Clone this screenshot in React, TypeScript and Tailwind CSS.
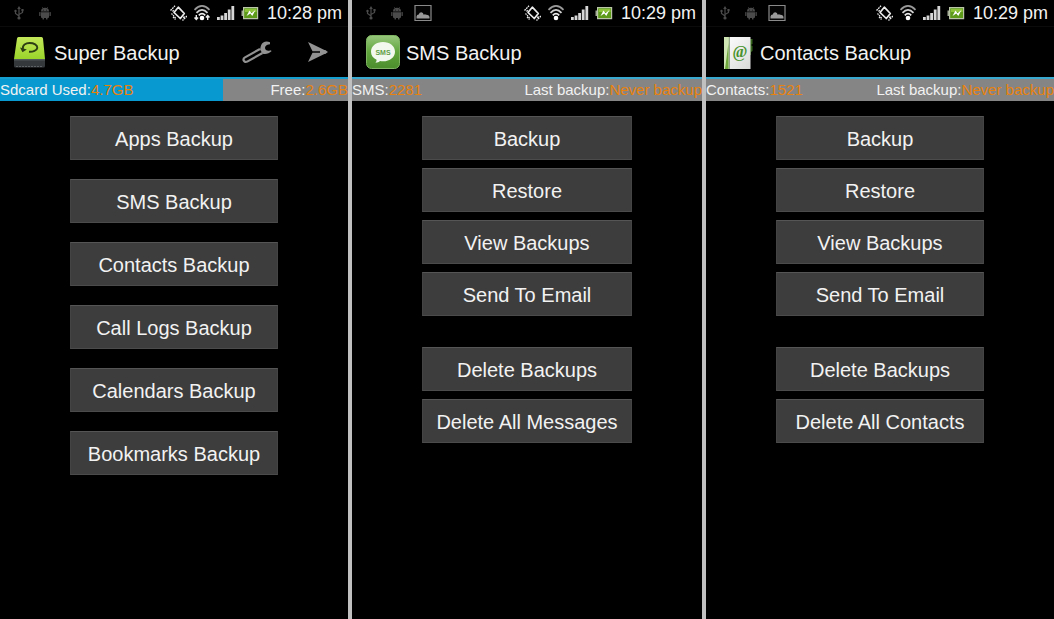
import { Fragment, type ReactNode } from "react";
import clsx from "clsx";

type InfoPair = { label: string; value: string };

type Screen = {
  title: string;
  time: string;
  icon: ReactNode;
  left: InfoPair;
  right: InfoPair;
  used?: number;
  home?: boolean;
  groups: string[][];
};

const UsbIcon = () => (
  <svg viewBox="0 0 18 18" className="size-[18px]" fill="none" stroke="#4b4b4b" aria-hidden="true">
    <path d="M9 4v10M9 12 5.500 9.500V7.500M9 10.500l3.500-2V6.500" strokeWidth="1.200" />
    <path d="M9 2 7.200 5h3.600z" fill="#4b4b4b" stroke="none" />
    <circle cx="9" cy="14" r="1.600" fill="#4b4b4b" stroke="none" />
    <circle cx="5.500" cy="7" r="1.200" fill="#4b4b4b" stroke="none" />
    <path d="M11.400 5h2.200v2.200h-2.200z" fill="#4b4b4b" stroke="none" />
  </svg>
);

const DroidIcon = () => (
  <svg viewBox="0 0 18 18" className="size-[18px]" fill="#4b4b4b" aria-hidden="true">
    <path d="M5 7.500a4 3.700 0 0 1 8 0z" />
    <path d="M5 8.300h8v4.700a1 1 0 0 1-1 1H6a1 1 0 0 1-1-1z" />
    <rect x="3.200" y="8" width="1.300" height="4" rx=".6" />
    <rect x="13.500" y="8" width="1.300" height="4" rx=".6" />
    <rect x="6.500" y="13" width="1.500" height="2.600" rx=".6" />
    <rect x="10" y="13" width="1.500" height="2.600" rx=".6" />
    <path d="m6.200 3 1 1.500M11.800 3l-1 1.500" stroke="#4b4b4b" strokeWidth=".6" />
    <path d="M7 5.700h.8v.8H7zM10.200 5.700h.8v.8h-.8z" fill="#000" />
  </svg>
);

const PictureIcon = () => (
  <svg viewBox="0 0 18 18" className="size-[18px]" aria-hidden="true">
    <path d="M1 1.500h16v15H1z" fill="#050505" stroke="#8a8a8a" strokeWidth="1.200" />
    <path d="M2.500 14.500V12.500q.3-2 2.200-2 .8-2.300 2.600-2.300 2 .2 2.400 2.500 1.200-.9 2.500 0 2.600-.2 3.300 2v1.800z" fill="#9a9a9a" />
  </svg>
);

const VibrateIcon = () => (
  <svg viewBox="0 0 18 18" className="size-[18px]" fill="none" stroke="#ececec" aria-hidden="true">
    <path d="m9.300 3.200 6 6.300-4 5L5 8.500z" strokeWidth="1.700" strokeLinejoin="round" />
    <path d="M1.500 6.500 6 1.800M3.500 7.500 5 6M18 12l-4.500 4.500M15.500 12.500 14 14" strokeWidth="1.300" strokeDasharray="1.800 .7" />
    <path d="m2.500 9.500 4.500 5M4 13l2.500 2.500" strokeWidth="1.200" strokeDasharray="1.500 .8" />
  </svg>
);

const WifiIcon = ({ hotspot }: { hotspot?: boolean }) => (
  <svg viewBox="0 0 18 18" className="size-[18px]" fill="none" stroke="#ececec" aria-hidden="true">
    <path d="M1.500 5.800Q9-2 16.500 5.800" stroke="#9a9a9a" strokeWidth="1.700" />
    <path d="M3.500 8.800Q9 2.800 14.500 8.800" stroke="#d0d0d0" strokeWidth="1.800" />
    <path d="M5.800 11.300Q9 7.800 12.200 11.300" strokeWidth="1.800" />
    <circle cx="9" cy="14" r="2.300" fill="#fff" stroke="none" />
    {hotspot && (
      <path d="M3.300 11v4.500M1.500 13.500l1.800 2 1.800-2M14.700 16v-4.500M12.900 13.500l1.800-2 1.800 2" strokeWidth="1.400" />
    )}
  </svg>
);

const SignalIcon = () => (
  <svg viewBox="0 0 18 18" className="size-[18px]" fill="#d6d6d6" aria-hidden="true">
    <path d="M0 13h2.800v3H0zM3.600 11.500h2.800V16H3.600zM7.200 9H10v7H7.200zM10.800 5.500h2.800V16h-2.800zM14.400 2h2.800v14h-2.800z" />
  </svg>
);

const BatteryIcon = () => (
  <svg viewBox="0 0 18 18" className="size-[18px]" aria-hidden="true">
    <path d="M.5 6.500h1.500v5.500H.5z" fill="#a5ad98" />
    <path d="M2.600 3.600h14v11h-14z" fill="#5d9a1a" stroke="#b9c5a6" strokeWidth="1.200" />
    <path d="M4 5h11.500v3H4z" fill="#8cc237" />
    <path d="m5.500 12 3-5.500 2 2.700L14.500 6l-3.200 6-2-2.500z" fill="#fff" />
  </svg>
);

const DriveIcon = () => (
  <svg viewBox="0 0 34 34" className="size-[34px]" aria-hidden="true">
    <defs>
      <linearGradient id="drive" x2="0" y2="1">
        <stop stopColor="#c3e85a" />
        <stop offset="1" stopColor="#9ad42a" />
      </linearGradient>
    </defs>
    <path d="M4.500 2h23q1.300 0 1.500 1.500L31 24H0L3 3.500Q3.200 2 4.500 2z" fill="url(#drive)" />
    <path d="M0 24h31v7q0 1.500-1.500 1.500h-28Q0 32.500 0 31z" fill="#34383a" />
    <path d="M0 24h31v1.500H0z" fill="#50585a" />
    <path d="M2 31.500h26" stroke="#5d6265" strokeDasharray="2 1" />
    <path d="M9 14C8 10 12 8 15.500 8c4.500 0 8 2 7.800 4.800C23 15.500 19 17 15 16.800" fill="none" stroke="#2d3d14" strokeWidth="1.900" />
    <path d="m6 12.500 2.500 4.800 4.300-2.800z" fill="#2d3d14" />
  </svg>
);

const SmsIcon = () => (
  <svg viewBox="0 0 34 34" className="size-[34px]" aria-hidden="true">
    <defs>
      <linearGradient id="sms" x2="0" y2="1">
        <stop stopColor="#98c77d" />
        <stop offset=".5" stopColor="#5fa53c" />
        <stop offset="1" stopColor="#4c8d2c" />
      </linearGradient>
    </defs>
    <rect x=".5" y=".5" width="33" height="33" rx="5" fill="url(#sms)" stroke="#7fb562" />
    <path d="M17 7c7 0 12 4.200 12 9.700s-5 9.600-12 9.600c-1 0-2-.1-3-.3-1 .9-2.500 1.700-4.500 1.700.8-1 1.200-2 1.100-3C7 23 5 20.200 5 16.700 5 11.200 10 7 17 7z" fill="#f3f8ef" />
    <text x="17" y="19.500" textAnchor="middle" fontSize="7" fontWeight="700" fill="#5f9e45" fontFamily="Liberation Sans, sans-serif">
      SMS
    </text>
  </svg>
);

const ContactsIcon = () => (
  <svg viewBox="0 0 34 34" className="size-[34px]" aria-hidden="true">
    <defs>
      <linearGradient id="page" x2="1" y2="1">
        <stop stopColor="#fff" />
        <stop offset="1" stopColor="#d8dad8" />
      </linearGradient>
    </defs>
    <path d="M29 4h3.500v5l-1.500 1 1.500 1v5l-1.500 1v3h-2z" fill="#37661f" />
    <path d="M4 2h26.500v32H4z" fill="url(#page)" />
    <path d="M4 2h5v32H4z" fill="#cfe6b4" />
    <path d="M8.500 8v26H5z" fill="#6fa83c" />
    <path d="M9.300 2v32" stroke="#7d9470" />
    <text x="20" y="22" textAnchor="middle" fontSize="16" fontWeight="700" fill="#47922c" fontFamily="Liberation Serif, serif">
      @
    </text>
  </svg>
);

const WrenchIcon = () => (
  <svg viewBox="0 0 30 24" className="h-6 w-[30px]" fill="none" stroke="#929292" aria-hidden="true">
    <path d="M18 9 3 17.400c-3 1.700-.8 5.800 2.200 4.200L20.500 13" strokeWidth="2.200" strokeLinejoin="round" />
    <path
      d="M28 2.300C24.500.6 20.500 1.600 19.200 5c-.8 2-.7 3.300-1.200 4.500l2.700 4.200c2.800.7 6.300.2 9-2.700l-1.400-.8c-2 1-4.300.5-5-1.200-.8-2.200.7-4.300 4.700-4.700z"
      fill="#929292"
      stroke="none"
    />
  </svg>
);

const SendIcon = () => (
  <svg viewBox="0 0 20 20" className="size-5" fill="#929292" aria-hidden="true">
    <path d="M0 0 19 9.200H4.500zM0 20l4.500-9.200H19z" />
    <path d="M12 8h5l3 2-3 2h-5z" />
  </svg>
);

const screens: Screen[] = [
  {
    title: "Super Backup",
    time: "10:28 pm",
    icon: <DriveIcon />,
    left: { label: "Sdcard Used:", value: "4.7GB" },
    right: { label: "Free:", value: "2.6GB" },
    used: 64,
    home: true,
    groups: [["Apps Backup", "SMS Backup", "Contacts Backup", "Call Logs Backup", "Calendars Backup", "Bookmarks Backup"]],
  },
  {
    title: "SMS Backup",
    time: "10:29 pm",
    icon: <SmsIcon />,
    left: { label: "SMS:", value: "2281" },
    right: { label: "Last backup:", value: "Never backup" },
    groups: [
      ["Backup", "Restore", "View Backups", "Send To Email"],
      ["Delete Backups", "Delete All Messages"],
    ],
  },
  {
    title: "Contacts Backup",
    time: "10:29 pm",
    icon: <ContactsIcon />,
    left: { label: "Contacts:", value: "1521" },
    right: { label: "Last backup:", value: "Never backup" },
    groups: [
      ["Backup", "Restore", "View Backups", "Send To Email"],
      ["Delete Backups", "Delete All Contacts"],
    ],
  },
];

const StatusBar = ({ time, home }: { time: string; home?: boolean }) => (
  <div className="flex h-[27px] items-center justify-between border-b border-[#0b0b0b] pr-[6px] pl-[10px]">
    <div className="flex items-center gap-2">
      <UsbIcon />
      <DroidIcon />
      {!home && <PictureIcon />}
    </div>
    <div className="flex items-center gap-[6px]">
      <VibrateIcon />
      <WifiIcon hotspot={home} />
      <SignalIcon />
      <BatteryIcon />
      <span className="pl-[2px] text-lg leading-6 whitespace-nowrap">{time}</span>
    </div>
  </div>
);

const Info = ({ label, value }: InfoPair) => (
  <span className="whitespace-nowrap">
    {label}
    <span className="text-[#e8820e]">{value}</span>
  </span>
);

const PhoneScreen = ({ title, time, icon, left, right, used = 0, home, groups }: Screen) => (
  <section className="min-w-0 overflow-hidden bg-black" aria-label={title}>
    <StatusBar time={time} home={home} />
    <header className="flex h-[50px] items-center gap-[6px] pr-5 pl-[14px]">
      {icon}
      <h1 className="flex-1 pt-[2px] text-xl whitespace-nowrap">{title}</h1>
      {home && (
        <div className="flex items-center gap-9">
          <button type="button" aria-label="Settings">
            <WrenchIcon />
          </button>
          <button type="button" aria-label="Share">
            <SendIcon />
          </button>
        </div>
      )}
    </header>
    <div className={clsx("grid border-t-2 bg-[#858585]", home ? "border-[#159fd0]" : "border-[#39a9d0]")}>
      <div className="col-start-1 row-start-1 bg-[#0799d0]" style={{ width: `${used}%` }} />
      <div className="col-start-1 row-start-1 flex items-center justify-between text-[15px] leading-[22px]">
        <Info {...left} />
        <Info {...right} />
      </div>
    </div>
    <div className="flex flex-col items-center gap-[31px] pt-[15px]">
      {groups.map((items) => (
        <div key={items[0]} className={clsx("flex w-[60%] flex-col", home ? "gap-[19px]" : "gap-2")}>
          {items.map((item) => (
            <button
              key={item}
              type="button"
              className="h-11 border border-t-[#555] border-r-[#444] border-b-[#4b4b4b] border-l-[#444] bg-[#3d3d3d] pt-[2px] text-xl whitespace-nowrap"
            >
              {item}
            </button>
          ))}
        </div>
      ))}
    </div>
  </section>
);

const App = () => (
  <main className="grid min-h-screen grid-cols-[348fr_4px_350fr_4px_348fr] bg-black font-['Liberation_Sans',sans-serif] text-[#f2f2f2]">
    {screens.map((screen, i) => (
      <Fragment key={screen.title}>
        {i > 0 && <div className="bg-[#c0c0c0]" />}
        <PhoneScreen {...screen} />
      </Fragment>
    ))}
  </main>
);

export default App;
